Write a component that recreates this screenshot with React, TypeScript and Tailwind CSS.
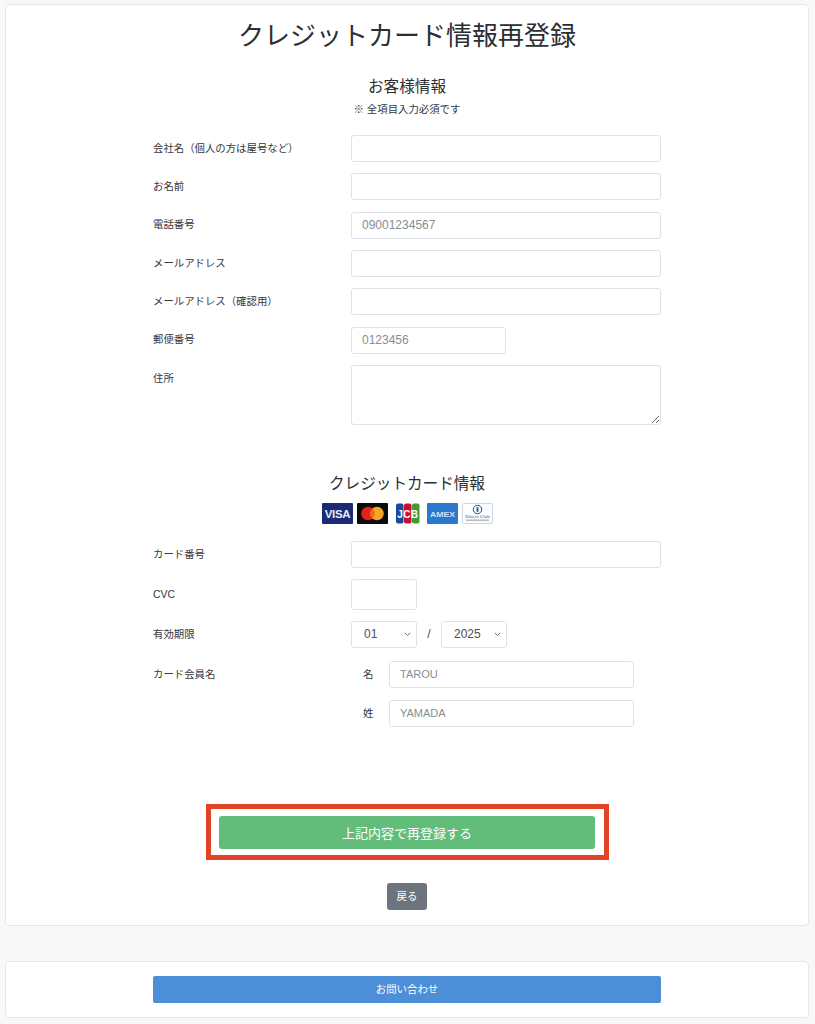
const font = { fontFamily: '"Liberation Sans", "Noto Sans CJK JP", sans-serif' };

const inputCls =
  'h-[27px] rounded-[3px] border border-[#dfe2e5] bg-white px-[10px] text-[12px] text-[#495057] outline-none placeholder:text-[#868e96]';

function Row({ label, children, className = '' }: { label: string; children: React.ReactNode; className?: string }) {
  return (
    <div className={`flex items-start ${className}`}>
      <div className="flex h-[27px] w-[198px] shrink-0 items-center text-[10.4px] text-[#33383d]">{label}</div>
      {children}
    </div>
  );
}

function CardLogos() {
  return (
    <div className="mt-[7px] flex justify-center gap-[4px]">
      {/* visa */}
      <svg width="31" height="21" viewBox="0 0 31 21">
        <rect width="31" height="21" rx="1" fill="#1a2a75" />
        <text x="15.5" y="15" textAnchor="middle" fontSize="11.5" fontWeight="700" fill="#e8ebf5" fontFamily="Liberation Sans" letterSpacing="-0.3">VISA</text>
      </svg>
      {/* mastercard */}
      <svg width="31" height="21" viewBox="0 0 31 21">
        <rect width="31" height="21" rx="1" fill="#0b0b0b" />
        <circle cx="11" cy="10.5" r="6.8" fill="#e2231a" />
        <circle cx="20" cy="10.5" r="6.8" fill="#f5a623" />
        <path d="M15.5 5.4a6.8 6.8 0 0 1 0 10.2a6.8 6.8 0 0 1 0-10.2z" fill="#f26522" />
      </svg>
      {/* jcb */}
      <svg width="31" height="21" viewBox="0 0 31 21">
        <rect width="31" height="21" fill="#fff" />
        <rect x="4" y="0.5" width="7.5" height="20" rx="2" fill="#164a9c" />
        <rect x="12" y="0.5" width="7.5" height="20" rx="2" fill="#c8102e" />
        <rect x="20" y="0.5" width="7.5" height="20" rx="2" fill="#3f9c35" />
        <text x="15.8" y="14.5" textAnchor="middle" fontSize="10" fontWeight="700" fill="#fff" fontFamily="Liberation Sans" letterSpacing="0.4">JCB</text>
      </svg>
      {/* amex */}
      <svg width="31" height="21" viewBox="0 0 31 21">
        <rect width="31" height="21" rx="1" fill="#2a78d0" />
        <text x="15.5" y="13.5" textAnchor="middle" fontSize="8" fontWeight="700" fill="#cfe2f7" fontFamily="Liberation Sans" textLength="25" lengthAdjust="spacingAndGlyphs">AMEX</text>
      </svg>
      {/* diners */}
      <svg width="31" height="21" viewBox="0 0 31 21">
        <rect x="0.5" y="0.5" width="30" height="20" rx="1" fill="#fbfdff" stroke="#c9d6e6" />
        <circle cx="15.5" cy="6.5" r="4.2" fill="#fff" stroke="#1d4f91" strokeWidth="1" />
        <rect x="14.6" y="4.2" width="1.8" height="4.6" fill="#1d4f91" />
        <text x="15.5" y="15" textAnchor="middle" fontSize="5" fill="#4a5563" fontFamily="Liberation Serif">Diners Club</text>
        <rect x="4" y="16.5" width="23" height="1.4" fill="#a9b3bf" />
      </svg>
    </div>
  );
}

function Select({ value }: { value: string }) {
  return (
    <div className="relative h-[27px] w-[66px]">
      <select
        defaultValue={value}
        className="h-full w-full appearance-none rounded-[3px] border border-[#dfe2e5] bg-white pl-[12px] text-[12px] text-[#495057] outline-none"
      >
        <option>{value}</option>
      </select>
      <svg className="absolute right-[6px] top-[11px]" width="7" height="5" viewBox="0 0 7 5" fill="none" stroke="#6b7278" strokeWidth="1">
        <path d="M0.8 0.8 L3.5 3.6 L6.2 0.8" />
      </svg>
    </div>
  );
}

export default function App() {
  return (
    <div className="min-h-[1024px] bg-[#f8f8f8] pl-[5px] pr-[6px] pt-[4px] text-[#212529]" style={font}>
      {/* main card */}
      <div className="h-[922px] rounded-[4px] border border-[#e6e6e6] bg-white pt-[10px]">
        <h1 className="text-center text-[26px] leading-[42px] text-[#2b2f33]">クレジットカード情報再登録</h1>

        <h2 className="mt-[18px] text-center text-[15.6px] leading-[24px] text-[#2b2f33]">お客様情報</h2>
        <p className="mt-[3px] text-center text-[10.4px] leading-[16px] text-[#33383d]">※ 全項目入力必須です</p>

        <form className="mx-auto mt-[17px] w-[508px]">
          <Row label="会社名（個人の方は屋号など）" className="mb-[11.33px]"><input className={`${inputCls} w-[310px]`} /></Row>
          <Row label="お名前" className="mb-[11.33px]"><input className={`${inputCls} w-[310px]`} /></Row>
          <Row label="電話番号" className="mb-[11.33px]"><input className={`${inputCls} w-[310px]`} placeholder="09001234567" /></Row>
          <Row label="メールアドレス" className="mb-[11.33px]"><input className={`${inputCls} w-[310px]`} /></Row>
          <Row label="メールアドレス（確認用）" className="mb-[11.33px]"><input className={`${inputCls} w-[310px]`} /></Row>
          <Row label="郵便番号" className="mb-[11.33px]"><input className={`${inputCls} w-[155px]`} placeholder="0123456" /></Row>
          <Row label="住所">
            <textarea className="block h-[60px] w-[310px] rounded-[3px] border border-[#dfe2e5] bg-white outline-none" />
          </Row>

          <h2 className="mt-[47px] text-center text-[15.6px] leading-[24px] text-[#2b2f33]">クレジットカード情報</h2>
          <CardLogos />

          <Row label="カード番号" className="mt-[17px]"><input className={`${inputCls} w-[310px]`} /></Row>
          <div className="mt-[11px] flex items-center">
            <div className="w-[198px] pt-[1px] text-[10.4px] text-[#33383d]">CVC</div>
            <input className="h-[31px] w-[66px] rounded-[3px] border border-[#dfe2e5] bg-white outline-none" />
          </div>
          <Row label="有効期限" className="mt-[11px]">
            <div className="flex items-center">
              <Select value="01" />
              <span className="w-[24px] text-center text-[12px] text-[#495057]">/</span>
              <Select value="2025" />
            </div>
          </Row>
          <Row label="カード会員名" className="mt-[13px]">
            <div className="flex flex-col gap-[12px]">
              <div className="flex items-center">
                <span className="w-[38px] pl-[12px] text-[10.4px] text-[#33383d]">名</span>
                <input className={`${inputCls} w-[245px] text-[11px] placeholder:text-[11px]`} placeholder="TAROU" />
              </div>
              <div className="flex items-center">
                <span className="w-[38px] pl-[12px] text-[10.4px] text-[#33383d]">姓</span>
                <input className={`${inputCls} w-[245px] text-[11px] placeholder:text-[11px]`} placeholder="YAMADA" />
              </div>
            </div>
          </Row>
        </form>

        {/* red annotation box */}
        <div className="mx-auto mt-[77px] flex h-[56px] w-[403px] items-center justify-center border-[5px] border-[#e04326] bg-white pt-[2px]">
          <button className="h-[33px] w-[376px] rounded-[3px] bg-[#63bd7a] pt-[1px] text-[13px] text-white">上記内容で再登録する</button>
        </div>

        <div className="mt-[23px] flex justify-center">
          <button className="h-[27px] w-[40px] rounded-[3px] bg-[#6c757d] text-[10.4px] text-white">戻る</button>
        </div>
      </div>

      {/* contact card */}
      <div className="mt-[35px] h-[57px] rounded-[4px] border border-[#e6e6e6] bg-white pt-[14px]">
        <button className="mx-auto block h-[27px] w-[508px] rounded-[2px] bg-[#4c8fd8] text-[10.4px] text-white">お問い合わせ</button>
      </div>
    </div>
  );
}
